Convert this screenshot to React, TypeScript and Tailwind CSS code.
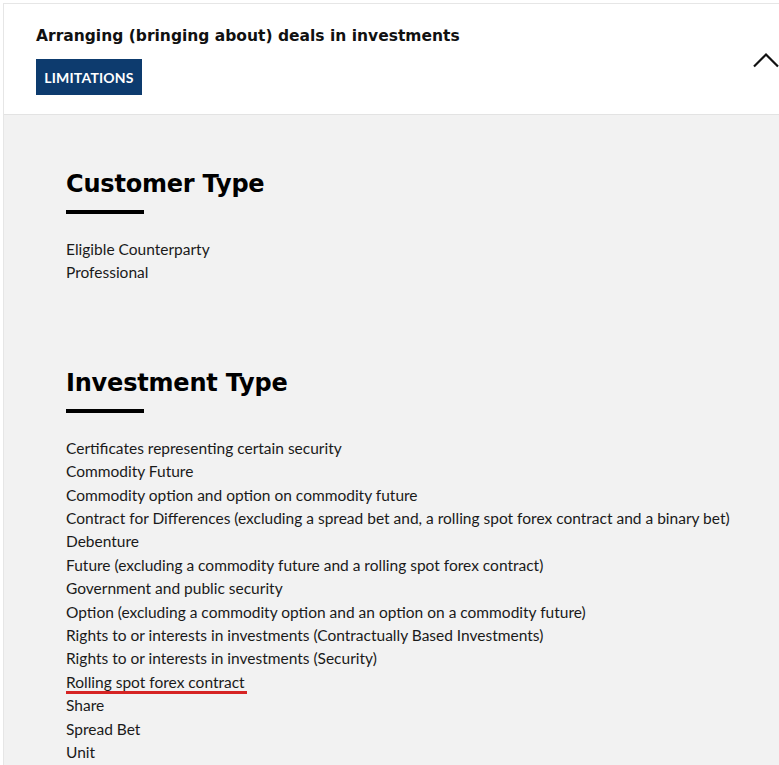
import React from 'react';

const customerTypes = ['Eligible Counterparty', 'Professional'];

const investmentTypes = [
  'Certificates representing certain security',
  'Commodity Future',
  'Commodity option and option on commodity future',
  'Contract for Differences (excluding a spread bet and, a rolling spot forex contract and a binary bet)',
  'Debenture',
  'Future (excluding a commodity future and a rolling spot forex contract)',
  'Government and public security',
  'Option (excluding a commodity option and an option on a commodity future)',
  'Rights to or interests in investments (Contractually Based Investments)',
  'Rights to or interests in investments (Security)',
  'Rolling spot forex contract',
  'Share',
  'Spread Bet',
  'Unit',
];

const Section: React.FC<{ title: string; items: string[]; highlight?: string }> = ({ title, items, highlight }) => (
  <section>
    <h2 className="text-[24px] leading-[30px] font-bold text-black font-['DejaVu_Sans',sans-serif] tracking-[-0.2px]">
      {title}
    </h2>
    <div className="w-[78px] h-[4px] bg-black mt-[11px] mb-[24px]" />
    <ul className="font-['Lato',sans-serif] text-[15.5px] leading-[23.4px] text-[#1a1a1a]">
      {items.map((item) => (
        <li key={item}>
          <span
            className={
              item === highlight
                ? 'inline-block border-b-[3px] border-[#d62424] leading-[17px] pr-[2px]'
                : undefined
            }
          >
            {item}
          </span>
        </li>
      ))}
    </ul>
  </section>
);

export default function App() {
  return (
    <div className="h-screen bg-white pl-[3px] pt-[3px] overflow-hidden">
      <div className="border-l border-t border-[#e6e6e6] w-[800px]">
        {/* Header */}
        <div className="bg-white border-b border-[#e3e3e3] h-[111px] pl-[32px] pt-[22px] flex justify-between">
          <div>
            <h1 className="font-['DejaVu_Sans',sans-serif] font-bold text-[15.5px] leading-[20px] text-[#111]">
              Arranging (bringing about) deals in investments
            </h1>
            <span className="mt-[13px] inline-flex items-center justify-center w-[106px] h-[36px] bg-[#0d3b6e] text-white font-['Lato',sans-serif] font-bold text-[14px] tracking-[0.2px]">
              LIMITATIONS
            </span>
          </div>
          <div className="w-[50px] flex items-start pt-[26px]">
            <svg width="26" height="16" viewBox="0 0 26 16" fill="none" stroke="#111" strokeWidth="2.2">
              <path d="M1 14.5 L13 2.5 L25 14.5" />
            </svg>
          </div>
        </div>

        {/* Body */}
        <div className="bg-[#f2f2f2] pl-[62px] pt-[54px] pb-[40px] min-h-[700px]">
          <Section title="Customer Type" items={customerTypes} />
          <div className="h-[83px]" />
          <Section title="Investment Type" items={investmentTypes} highlight="Rolling spot forex contract" />
        </div>
      </div>
    </div>
  );
}
